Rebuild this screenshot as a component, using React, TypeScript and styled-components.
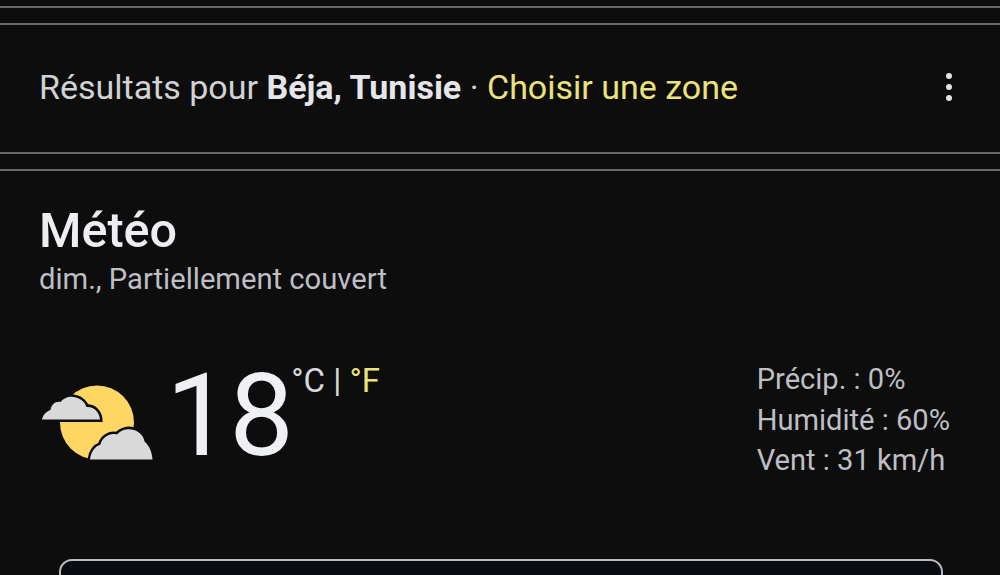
import React from "react";
import styled, { createGlobalStyle } from "styled-components";

const Global = createGlobalStyle`
  html, body { margin: 0; padding: 0; background: #0d0d0e; }
  body { font-family: Roboto, "Liberation Sans", sans-serif; }
`;

const Page = styled.div`
  width: 1000px;
  height: 575px;
  overflow: hidden;
  background: #0d0d0e;
  display: flex;
  flex-direction: column;
`;

const Divider = styled.div<{ $gap: number }>`
  height: 2px;
  flex: none;
  margin-top: ${(p) => p.$gap}px;
  background: #66686c;
`;

const LocationBar = styled.div`
  height: 127px;
  flex: none;
  padding: 0 40px 3px;
  display: flex;
  align-items: center;
  justify-content: space-between;
  box-sizing: border-box;
`;

const LocationText = styled.div`
  font-size: 34px;
  line-height: 40px;
  margin-left: -1px;
  color: #d0d2d5;
  white-space: nowrap;
`;

const Place = styled.strong`
  font-weight: 700;
  color: #e4e6ea;
`;

const ZoneLink = styled.span`
  color: #ece27a;
`;

const MoreButton = styled.div`
  width: 10px;
  margin-right: 6px;
  display: flex;
  flex-direction: column;
  gap: 4.5px;
  align-items: center;
`;

const Dot = styled.span`
  width: 6.5px;
  height: 6.5px;
  border-radius: 50%;
  background: #e2e3e5;
`;

const Weather = styled.section`
  flex: 1;
  padding: 33px 50px 0 40px;
  display: flex;
  flex-direction: column;
`;

const Title = styled.h2`
  margin: 0 0 0 -1px;
  font-size: 48.5px;
  line-height: 54px;
  font-weight: 500;
  color: #eceef1;
`;

const Subtitle = styled.div`
  font-size: 29.2px;
  line-height: 36px;
  margin: 3px 0 0 -1px;
  color: #bdbfc3;
`;

const Current = styled.div`
  display: flex;
  align-items: flex-start;
  margin-top: 60px;
`;

const WeatherIcon = styled.svg`
  width: 115px;
  height: 80px;
  flex: none;
  margin-top: 27px;
`;

const Temperature = styled.div`
  margin: 0 0 0 11px;
  font-size: 115px;
  line-height: 118px;
  font-weight: 400;
  color: #eff0f4;
  letter-spacing: -1.5px;
`;

const Units = styled.div`
  margin: 5px 0 0 -1px;
  font-size: 33px;
  line-height: 38px;
  color: #d6d8db;
  white-space: nowrap;
`;

const ActiveUnit = styled.span`
  color: #ece27a;
`;

const Stats = styled.div`
  margin: 2px 0 0 auto;
  font-size: 29.1px;
  line-height: 40.5px;
  color: #bdbfc3;
`;

const StatRow = styled.div`
  white-space: nowrap;
`;

const BarSlot = styled.div`
  margin-top: 78px;
`;

const TabBar = styled.div`
  height: 40px;
  margin: 0 7px 0 19px;
  border: 2px solid #b9bbbe;
  border-radius: 13px;
  background: #0a0b10;
  box-sizing: border-box;
`;

export default function App() {
  return (
    <Page>
      <Global />
      <Divider $gap={6} />
      <Divider $gap={15} />
      <LocationBar>
        <LocationText>
          Résultats pour <Place>Béja, Tunisie</Place> · <ZoneLink>Choisir une zone</ZoneLink>
        </LocationText>
        <MoreButton>
          <Dot />
          <Dot />
          <Dot />
        </MoreButton>
      </LocationBar>
      <Divider $gap={0} />
      <Divider $gap={15} />
      <Weather>
        <Title>Météo</Title>
        <Subtitle>dim., Partiellement couvert</Subtitle>
        <Current>
          <WeatherIcon viewBox="40 383 115 80">
            <circle cx="97" cy="421.5" r="37" fill="#fdd663" />
            <path
              d="M42 418.5C43 413.5 47 410 50.5 409C51.5 403.5 55.5 400 60.5 401C64 396.5 70 394.5 76 396.5C82 398 85.5 402.5 86.5 406C93 405 99.5 410.5 100 418.5Z"
              fill="#d9d9d9"
              stroke="#0d0d0e"
              strokeWidth="5"
              paintOrder="stroke"
            />
            <path
              d="M90 458.5C91 450.5 95 445.5 100.5 443.5C102 436.5 110 431.5 117 433.5C121 428.5 128 427 134 429C140 431 144 435.5 144.5 440.5C149 444.5 152 450.5 152.5 458.5Z"
              fill="#d9d9d9"
              stroke="#0d0d0e"
              strokeWidth="5"
              paintOrder="stroke"
            />
          </WeatherIcon>
          <Temperature>18</Temperature>
          <Units>
            °C | <ActiveUnit>°F</ActiveUnit>
          </Units>
          <Stats>
            <StatRow>Précip. : 0%</StatRow>
            <StatRow>Humidité : 60%</StatRow>
            <StatRow>Vent : 31 km/h</StatRow>
          </Stats>
        </Current>
        <BarSlot>
          <TabBar />
        </BarSlot>
      </Weather>
    </Page>
  );
}
